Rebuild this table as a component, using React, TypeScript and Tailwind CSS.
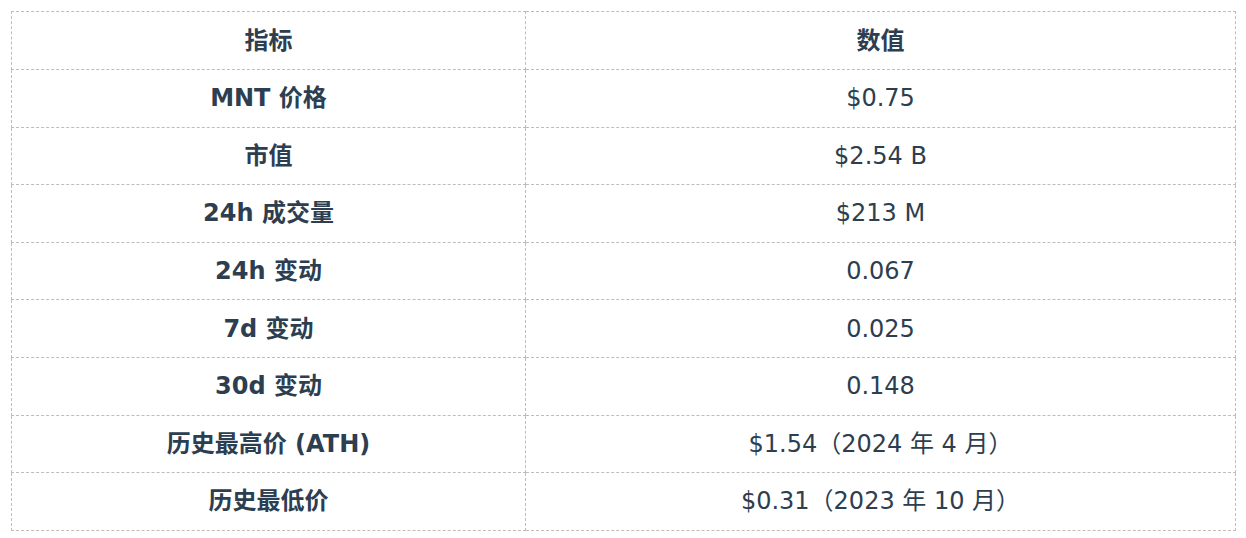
import React from 'react';

const rows: [string, string][] = [
  ['MNT 价格', '$0.75'],
  ['市值', '$2.54 B'],
  ['24h 成交量', '$213 M'],
  ['24h 变动', '0.067'],
  ['7d 变动', '0.025'],
  ['30d 变动', '0.148'],
  ['历史最高价 (ATH)', '$1.54（2024 年 4 月）'],
  ['历史最低价', '$0.31（2023 年 10 月）'],
];

const font = { fontFamily: '"DejaVu Sans", "Noto Sans CJK SC", sans-serif' };

export default function App() {
  return (
    <div className="bg-white p-[11px] w-[1246px] h-[538px]" style={font}>
      <table className="w-[1225px] border-collapse text-[24px] leading-[30px] text-[#2c3e50] table-fixed">
        <colgroup>
          <col className="w-[514px]" />
          <col />
        </colgroup>
        <thead>
          <tr className="h-[58px]">
            <th className="border border-dashed border-[#bdbdbd] font-bold text-center">指标</th>
            <th className="border border-dashed border-[#bdbdbd] font-bold text-center">数值</th>
          </tr>
        </thead>
        <tbody>
          {rows.map(([k, v]) => (
            <tr key={k} className="h-[57.6px]">
              <td className="border border-dashed border-[#bdbdbd] font-bold text-center">{k}</td>
              <td className="border border-dashed border-[#bdbdbd] text-center">{v}</td>
            </tr>
          ))}
        </tbody>
      </table>
    </div>
  );
}
